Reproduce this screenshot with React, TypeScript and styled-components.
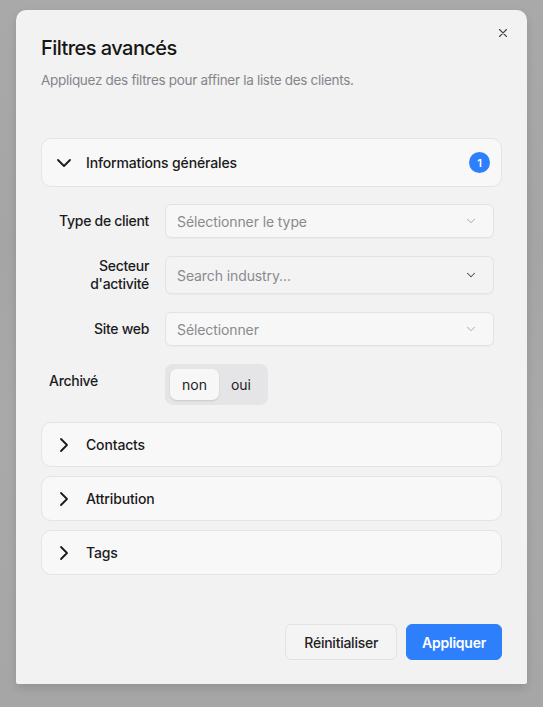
import React from "react";
import styled, { createGlobalStyle } from "styled-components";

const GlobalStyle = createGlobalStyle`
  * { box-sizing: border-box; }
  html, body {
    margin: 0;
    padding: 0;
    background: #a7a7a7;
    font-family: Inter, "Noto Sans", sans-serif;
    color: #1c1c1e;
  }
`;

const Backdrop = styled.div`
  width: 543px;
  height: 707px;
  padding: 10px 16px 0 16px;
  background: linear-gradient(180deg, #a9a9a9 0%, #a5a5a5 35%, #a9a9a9 60%, #a6a6a6 100%);
  overflow: hidden;
`;

const Dialog = styled.div`
  position: relative;
  width: 511px;
  height: 674px;
  background: #f2f2f2;
  border-radius: 10px 10px 2px 2px;
  box-shadow: 0 4px 10px rgba(0, 0, 0, 0.12);
  padding: 24px 25px 24px 25px;
  display: flex;
  flex-direction: column;
`;

const CloseButton = styled.button`
  position: absolute;
  top: 12px;
  right: 13px;
  width: 22px;
  height: 22px;
  border: none;
  background: transparent;
  padding: 0;
  display: flex;
  align-items: center;
  justify-content: center;
`;

const Title = styled.h2`
  margin: 0;
  font-size: 20px;
  line-height: 28px;
  font-weight: 500;
  letter-spacing: -0.55px;
  color: #161616;
`;

const Subtitle = styled.p`
  margin: 8px 0 0 0;
  font-size: 13.5px;
  line-height: 20px;
  letter-spacing: -0.3px;
  color: #85858a;
`;

const Sections = styled.div`
  margin-top: 48px;
  display: flex;
  flex-direction: column;
  gap: 9px;
`;

const AccordionHeader = styled.div<{ $open?: boolean }>`
  height: ${({ $open }) => ($open ? "49px" : "45px")};
  background: #f8f8f8;
  border: 1px solid #e4e4e6;
  border-radius: 10px;
  display: flex;
  align-items: center;
  padding: 0 11px 0 10px;
  gap: 10px;
`;

const AccordionTitle = styled.span`
  flex: 1;
  font-size: 14px;
  font-weight: 500;
  letter-spacing: -0.15px;
  color: #1a1a1a;
`;

const Badge = styled.span`
  width: 21px;
  height: 21px;
  border-radius: 50%;
  background: #2e7ffb;
  color: #fff;
  font-size: 11px;
  font-weight: 600;
  display: flex;
  align-items: center;
  justify-content: center;
`;

const Fields = styled.div`
  display: grid;
  grid-template-columns: 100px 1fr;
  column-gap: 16px;
  row-gap: 18px;
  padding: 17px 8px 8px 8px;
  align-items: center;
`;

const Label = styled.label<{ $left?: boolean }>`
  font-size: 14px;
  line-height: 18px;
  font-weight: 500;
  letter-spacing: -0.3px;
  color: #1c1c1e;
  text-align: ${({ $left }) => ($left ? "left" : "right")};
  align-self: ${({ $left }) => ($left ? "start" : "center")};
  padding-top: ${({ $left }) => ($left ? "8px" : "0")};
`;

const Select = styled.div<{ $tall?: boolean; $search?: boolean }>`
  height: ${({ $tall }) => ($tall ? "38px" : "34px")};
  background: ${({ $search }) => ($search ? "#f3f3f4" : "#f7f7f7")};
  border: 1px solid #e3e3e5;
  border-radius: 6px;
  display: flex;
  align-items: center;
  justify-content: space-between;
  padding: 0 15px 0 11px;
  font-size: 14px;
  letter-spacing: -0.1px;
  color: #8a8a8e;
  box-shadow: 0 1px 1px rgba(0, 0, 0, 0.03);
`;

const Segmented = styled.div`
  justify-self: start;
  display: flex;
  align-items: center;
  gap: 0;
  padding: 5px;
  background: #e5e5e8;
  border-radius: 8px;
  height: 41px;
`;

const Segment = styled.span<{ $active?: boolean }>`
  height: 31px;
  padding: 0 12px;
  display: flex;
  align-items: center;
  font-size: 14px;
  color: #1c1c1e;
  border-radius: 7px;
  background: ${({ $active }) => ($active ? "#f7f7f7" : "transparent")};
  box-shadow: ${({ $active }) => ($active ? "0 1px 2px rgba(0,0,0,0.12)" : "none")};
`;

const Footer = styled.div`
  margin-top: auto;
  display: flex;
  justify-content: flex-end;
  gap: 9px;
`;

const Button = styled.button<{ $primary?: boolean }>`
  height: 36px;
  padding: 0 ${({ $primary }) => ($primary ? "15px" : "18px")};
  border-radius: 6px;
  font-family: inherit;
  font-size: 14px;
  letter-spacing: -0.25px;
  font-weight: ${({ $primary }) => ($primary ? 600 : 500)};
  color: ${({ $primary }) => ($primary ? "#ffffff" : "#222")};
  background: ${({ $primary }) => ($primary ? "#2e7ffb" : "#f4f4f4")};
  border: 1px solid ${({ $primary }) => ($primary ? "#2e7ffb" : "#e2e2e4")};
`;

const Chevron = ({ dir, color = "#1a1a1a", size = 24, width = 2 }: { dir: "down" | "right"; color?: string; size?: number; width?: number }) => (
  <svg width={size} height={size} viewBox="0 0 24 24" fill="none" stroke={color} strokeWidth={width} strokeLinecap="round" strokeLinejoin="round">
    {dir === "down" ? <path d="m6 9 6 6 6-6" /> : <path d="m9 6 6 6-6 6" />}
  </svg>
);

const sections = ["Contacts", "Attribution", "Tags"];

export default function App() {
  return (
    <>
      <GlobalStyle />
      <Backdrop>
        <Dialog>
          <CloseButton aria-label="Fermer">
            <svg width="14" height="14" viewBox="0 0 24 24" fill="none" stroke="#4a4a4a" strokeWidth="2" strokeLinecap="round">
              <path d="M18 6 6 18M6 6l12 12" />
            </svg>
          </CloseButton>
          <Title>Filtres avancés</Title>
          <Subtitle>Appliquez des filtres pour affiner la liste des clients.</Subtitle>

          <Sections>
            <div>
              <AccordionHeader $open>
                <Chevron dir="down" width={1.8} />
                <AccordionTitle>Informations générales</AccordionTitle>
                <Badge>1</Badge>
              </AccordionHeader>
              <Fields>
                <Label>Type de client</Label>
                <Select>
                  Sélectionner le type
                  <Chevron dir="down" color="#a3a3a8" size={14} width={1.6} />
                </Select>
                <Label>
                  Secteur
                  <br />
                  d'activité
                </Label>
                <Select $tall $search>
                  Search industry...
                  <Chevron dir="down" color="#4a4a50" size={14} width={1.8} />
                </Select>
                <Label>Site web</Label>
                <Select>
                  Sélectionner
                  <Chevron dir="down" color="#a3a3a8" size={14} width={1.6} />
                </Select>
                <Label $left>Archivé</Label>
                <Segmented>
                  <Segment $active>non</Segment>
                  <Segment>oui</Segment>
                </Segmented>
              </Fields>
            </div>
            {sections.map((s) => (
              <AccordionHeader key={s}>
                <Chevron dir="right" width={1.8} />
                <AccordionTitle>{s}</AccordionTitle>
              </AccordionHeader>
            ))}
          </Sections>

          <Footer>
            <Button>Réinitialiser</Button>
            <Button $primary>Appliquer</Button>
          </Footer>
        </Dialog>
      </Backdrop>
    </>
  );
}
